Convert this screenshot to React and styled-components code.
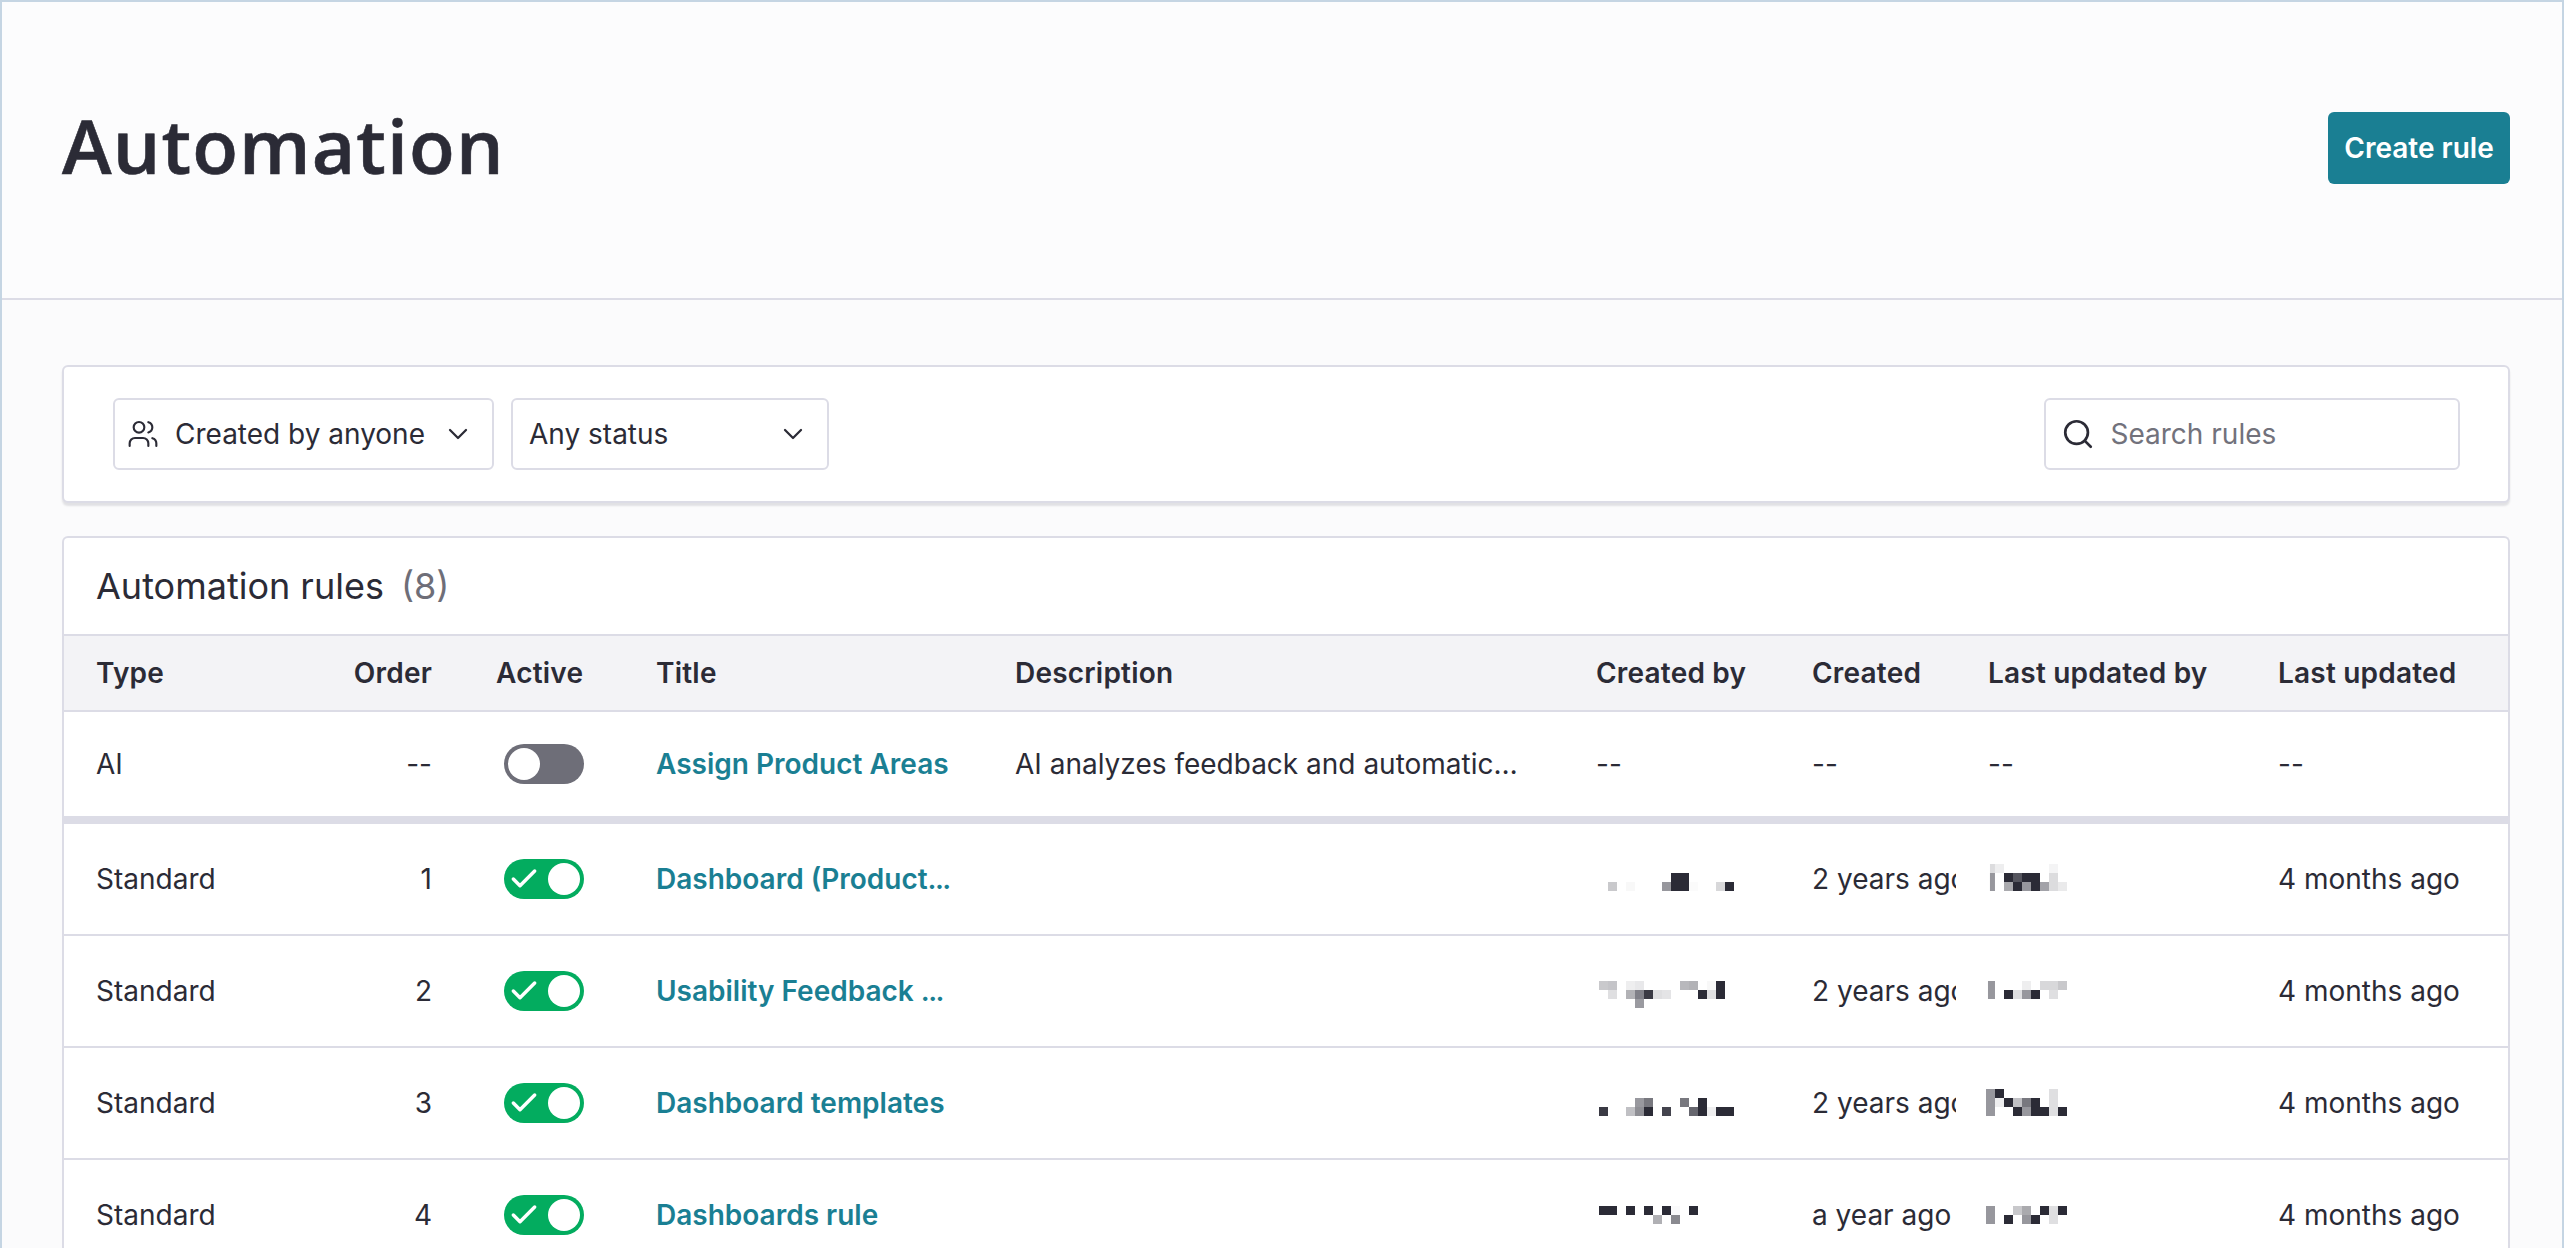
import React from 'react';
import styled, { createGlobalStyle } from 'styled-components';
import { ChevronDown, Search, Users, Check } from 'lucide-react';

const DARK = '#2b2b36';
const LINE = '#dcdce6';
const TEAL = '#1a7f93';

const GlobalStyle = createGlobalStyle`
  html, body {
    margin: 0;
    height: 100%;
    overflow: hidden;
  }
  body {
    font-family: Inter, "Liberation Sans", sans-serif;
    color: ${DARK};
    background: #fbfbfc;
  }
  * {
    box-sizing: border-box;
  }
`;

const Page = styled.div`
  height: 1248px;
  overflow: hidden;
  border: solid #c5d5e3;
  border-width: 2px 2px 0 2px;
  background: #fbfbfc;
`;

const Header = styled.header`
  height: 298px;
  padding: 110px 52px 0 60px;
  display: flex;
  justify-content: space-between;
  align-items: flex-start;
  background: #fcfcfd;
  border-bottom: 2px solid ${LINE};
`;

const Title = styled.h1`
  margin: 0;
  font-family: "Open Sans", Inter, sans-serif;
  font-size: 75px;
  line-height: 66px;
  font-weight: 600;
  letter-spacing: 1.1px;
  -webkit-text-stroke: 0.6px ${DARK};
`;

const CreateButton = styled.button`
  width: 182px;
  height: 72px;
  border: 0;
  border-radius: 6px;
  background: ${TEAL};
  color: #fff;
  font: 600 28px Inter, sans-serif;
`;

const Content = styled.main`
  padding: 65px 52px 0 60px;
`;

const FilterCard = styled.section`
  height: 138px;
  padding: 31px 48px 31px 49px;
  display: flex;
  align-items: flex-start;
  gap: 17px;
  background: #fff;
  border: 2px solid ${LINE};
  border-radius: 6px;
  box-shadow: 0 3px 2px rgba(40, 40, 60, 0.12);
`;

const Dropdown = styled.div`
  width: ${(p) => p.$width}px;
  height: 72px;
  padding: 0 18px 0 ${(p) => p.$inset}px;
  display: flex;
  align-items: center;
  gap: 16px;
  background: #fff;
  border: 2px solid ${LINE};
  border-radius: 6px;
  font-size: 28px;

  > span {
    flex: 1;
  }
`;

const SearchBox = styled(Dropdown)`
  margin-left: auto;
  gap: 15.5px;
  color: #72727c;
`;

const TableCard = styled.section`
  margin-top: 33px;
  background: #fff;
  border: solid ${LINE};
  border-width: 2px 2px 0 2px;
  border-radius: 6px 6px 0 0;
`;

const TableTitle = styled.div`
  height: 96px;
  padding: 0 32px;
  display: flex;
  align-items: center;
  font-size: 36px;

  > em {
    margin-left: 17px;
    font-style: normal;
    color: #6e6e78;
  }
`;

const Row = styled.div`
  padding-left: 32px;
  display: grid;
  grid-template-columns: 204px 132px 128px 327px 549px 184px 144px 258px 182px;
  column-gap: 32px;
  align-items: center;
  height: ${(p) => p.$height}px;
  border-bottom: ${(p) => p.$rule}px solid ${LINE};
`;

const HeadRow = styled(Row)`
  background: #f3f3f6;
  border-top: 2px solid ${LINE};
`;

const Cell = styled.div`
  font-size: 28px;
  white-space: nowrap;
  overflow: hidden;
  padding-right: ${(p) => (p.$right ? 32 : 0)}px;
  text-align: ${(p) => (p.$right ? 'right' : 'left')};
`;

const HeadCell = styled(Cell)`
  font-weight: 600;
  letter-spacing: 0.2px;
`;

const TitleLink = styled(Cell)`
  color: ${TEAL};
  font-weight: 600;
`;

const Dots = styled.span`
  letter-spacing: -1.6px;
`;

const Toggle = styled.div`
  position: relative;
  width: 80px;
  height: 40px;
  margin-left: 8px;
  padding: 4px;
  display: flex;
  justify-content: ${(p) => (p.$on ? 'flex-end' : 'flex-start')};
  border-radius: 20px;
  background: ${(p) => (p.$on ? '#03ac5f' : '#6e6e78')};

  svg {
    position: absolute;
    left: 4px;
    top: 4px;
  }

  &::after {
    content: '';
    width: 32px;
    height: 32px;
    border-radius: 50%;
    background: #fff;
  }
`;

const Mosaic = styled.svg`
  display: block;
  margin-left: ${(p) => p.$left}px;
`;

// blurred user names: [column, row, colour, width?] on a 9px grid
const D = DARK;
const createdBy = [
  { top: 19, cells: [[1, 1, '#c9c9cc'], [3, 1, '#f8f8f8'], [7, 1, '#97979d'], [8, 0, D], [8, 1, D], [9, 0, D], [9, 1, D], [10, 1, '#fbfbfb'], [13, 1, '#d8d8da'], [14, 1, D]] },
  { top: 15, cells: [[0, 0, '#c9c9cc'], [1, 0, '#c4c4c8'], [1, 1, '#dfdfe1'], [3, 0, '#eeeeef'], [4, 0, '#e8e8ea'], [3, 1, '#b2b2b6'], [4, 1, '#808088'], [5, 1, '#3a3a44'], [6, 1, '#dfdfe1'], [7, 1, '#e4e4e6'], [4, 2, '#9a9aa0'], [9, 0, '#b8b8bc'], [10, 0, '#b2b2b6'], [11, 1, D], [12, 0, '#f8f8f8'], [12, 1, '#dfdfe1'], [13, 0, D], [13, 1, D]] },
  { top: 20, cells: [[0, 1, '#3a3a44'], [3, 1, '#c0c0c4'], [4, 0, '#98989e'], [4, 1, '#8e8e94'], [5, 0, '#78787f'], [5, 1, D], [7, 1, '#44444e'], [9, 0, '#78787f'], [10, 1, '#66666e'], [11, 0, D], [11, 1, D], [12, 1, '#eeeeef'], [13, 1, D], [14, 1, D]] },
  { top: 16, cells: [[0, 0, D], [1, 0, D], [3, 0, D], [5, 0, D], [6, 1, '#b0b0b4'], [7, 0, D], [8, 0, '#fafafb'], [8, 1, '#8a8a90'], [10, 0, D]] },
];
const updatedBy = [
  { top: 10, cells: [[0.44, 0, '#dcdcde', 5], [0.44, 1, '#97979d', 5], [0.44, 2, '#97979d', 5], [1, 0, '#eeeeef'], [2, 1, D], [2, 2, '#aaaaae'], [3, 1, '#55555e'], [3, 2, D], [4, 1, D], [4, 2, '#97979d'], [5, 1, D], [5, 2, D], [6, 2, '#a2a2a8'], [7, 0, '#f4f4f5'], [7, 1, '#dcdcde'], [7, 2, '#dcdcde'], [8, 2, '#eaeaeb']] },
  { top: 15, cells: [[0.22, 0, '#97979d', 7], [0.22, 1, '#97979d', 7], [2, 1, D], [3, 1, '#dfdfe1'], [4, 0, '#eeeeef'], [4, 1, '#97979d'], [5, 1, D], [6, 0, '#d8d8da'], [7, 0, '#d8d8da'], [7, 1, '#dfdfe1'], [8, 0, '#c8c8cb']] },
  { top: 11, cells: [[0, 0, '#97979d'], [0, 1, '#97979d'], [0, 2, '#97979d'], [1, 0, D], [1, 1, '#eeeeef'], [2, 1, D], [3, 1, '#c0c0c4'], [3, 2, D], [4, 1, '#78787f'], [4, 2, '#97979d'], [5, 1, D], [5, 2, D], [6, 2, D], [7, 0, '#dfdfe1'], [7, 1, '#dfdfe1'], [7, 2, '#dfdfe1'], [8, 2, D]] },
  { top: 16, cells: [[0, 0, '#97979d'], [0, 1, '#97979d'], [2, 1, D], [3, 0, '#c8c8cb'], [4, 0, '#aaaaae'], [4, 1, '#97979d'], [5, 1, D], [6, 0, D], [7, 0, '#dfdfe1'], [7, 1, '#dfdfe1'], [8, 0, D]] },
];

function Blur({ data, left }) {
  return (
    <Mosaic width="160" height="50" $left={left}>
      {data.cells.map(([x, y, fill, w = 9]) => (
        <rect key={`${x}-${y}`} x={x * 9} y={data.top + y * 9} width={w} height="9" fill={fill} />
      ))}
    </Mosaic>
  );
}

const ruleRows = [
  { order: '1', title: 'Dashboard (Product', cut: true, created: '2 years ago' },
  { order: '2', title: 'Usability Feedback ', cut: true, created: '2 years ago' },
  { order: '3', title: 'Dashboard templates', created: '2 years ago' },
  { order: '4', title: 'Dashboards rule', created: 'a year ago' },
];

export default function App() {
  return (
    <Page>
      <GlobalStyle />
      <Header>
        <Title>Automation</Title>
        <CreateButton>Create rule</CreateButton>
      </Header>
      <Content>
        <FilterCard>
          <Dropdown $width={381} $inset={12}>
            <Users size={32} strokeWidth={1.6} />
            <span>Created by anyone</span>
            <ChevronDown size={32} strokeWidth={1.7} />
          </Dropdown>
          <Dropdown $width={318} $inset={16}>
            <span>Any status</span>
            <ChevronDown size={32} strokeWidth={1.7} />
          </Dropdown>
          <SearchBox $width={416} $inset={15}>
            <Search size={34} strokeWidth={1.9} color={DARK} />
            <span>Search rules</span>
          </SearchBox>
        </FilterCard>
        <TableCard>
          <TableTitle>
            Automation rules <em>(8)</em>
          </TableTitle>
          <HeadRow $height={78} $rule={2}>
            <HeadCell>Type</HeadCell>
            <HeadCell $right>Order</HeadCell>
            <HeadCell>Active</HeadCell>
            <HeadCell>Title</HeadCell>
            <HeadCell>Description</HeadCell>
            <HeadCell>Created by</HeadCell>
            <HeadCell>Created</HeadCell>
            <HeadCell>Last updated by</HeadCell>
            <HeadCell>Last updated</HeadCell>
          </HeadRow>
          <Row $height={112} $rule={8}>
            <Cell>AI</Cell>
            <Cell $right>--</Cell>
            <Toggle />
            <TitleLink>Assign Product Areas</TitleLink>
            <Cell>AI analyzes feedback and automatic…</Cell>
            <Cell>--</Cell>
            <Cell>--</Cell>
            <Cell>--</Cell>
            <Cell>--</Cell>
          </Row>
          {ruleRows.map((rule, i) => (
            <Row key={rule.order} $height={112} $rule={2}>
              <Cell>Standard</Cell>
              <Cell $right>{rule.order}</Cell>
              <Toggle $on>
                <Check size={32} strokeWidth={2.6} color="#fff" />
              </Toggle>
              <TitleLink>
                {rule.title}
                {rule.cut && <Dots>...</Dots>}
              </TitleLink>
              <div />
              <Blur data={createdBy[i]} left={3} />
              <Cell>{rule.created}</Cell>
              <Blur data={updatedBy[i]} left={-2} />
              <Cell>4 months ago</Cell>
            </Row>
          ))}
        </TableCard>
      </Content>
    </Page>
  );
}
